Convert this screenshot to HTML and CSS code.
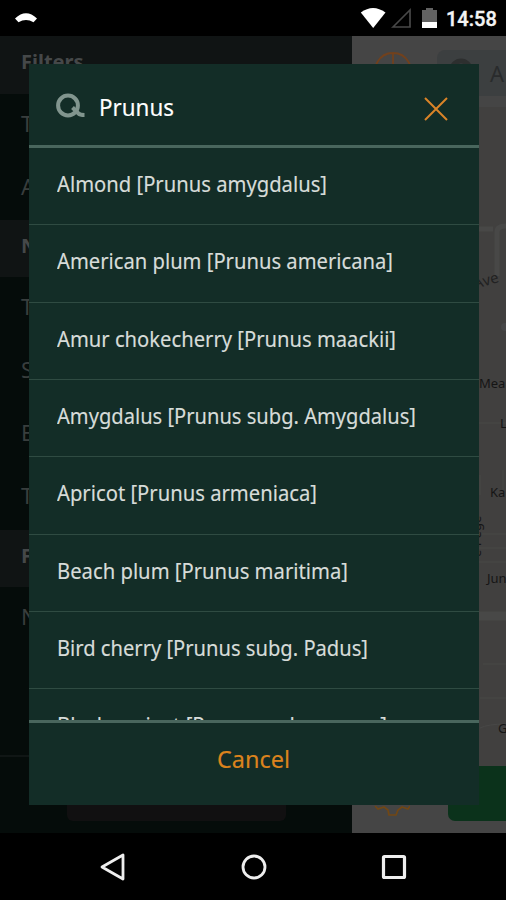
FILE: index.html
```html
<!DOCTYPE html>
<html lang="en">
<head>
<meta charset="utf-8">
<title>Species search</title>
<link rel="stylesheet" href="styles.css">
</head>
<body>
<div class="phone">
  <header class="status">
    <svg class="status-left" width="24" height="12" viewBox="0 0 24 12"><path d="M1 6.500Q12-4 23 6.500L19.500 10.300Q12 5.500 4.500 10.300Z" fill="#fff"/></svg>
    <svg class="status-icons" width="80" height="24" viewBox="0 0 80 24">
      <path d="M.8 6.500Q13-2.500 25.500 6.500L13.200 22Z" fill="#fff"/>
      <path d="M33 21L50 4V21Z" fill="none" stroke="#484848" stroke-width="1.700"/>
      <path d="M62 4h4V2h7v2h4v12H62Z" fill="#626262"/><path d="M62 16h15v6H62Z" fill="#fff"/>
    </svg>
    <span class="clock">14:58</span>
  </header>
  <main class="screen">
    <aside class="drawer">
      <h2>Filters</h2><p>T</p><p>A</p>
      <h2>N</h2><p>T</p><p>S</p><p>E</p><p>T</p>
      <h2>F</h2><p>N</p>
      <div class="drawer-foot"><div class="drawer-button"></div></div>
    </aside>
    <section class="map-pane">
      <div class="map-top">
        <svg class="locate" width="38" height="38" viewBox="0 0 38 38"><path d="M19 1a18 18 0 1 0 .01 0M19 1v12M1 19h12M25 19h12" fill="none" stroke="#71411d" stroke-width="1.800"/></svg>
        <div class="field"><svg width="24" height="24" viewBox="0 0 24 24"><circle cx="12" cy="12" r="9" fill="none" stroke="#2d2f2f" stroke-width="5"/></svg><span>A</span></div>
      </div>
      <svg class="map" width="154" height="659" viewBox="352 107 154 659">
        <g fill="none" stroke="#484847"><path d="M478 229h15M497 276v-44q0-6 9-6" stroke-width="5"/><path d="M478 616h28" stroke-width="9"/><path d="M478 423h28M478 534h28M478 548h28M478 562h28M483 664h23M480 698h26M480 728q8-4 26-4M480 495v-20M503 470v20" stroke-width="1"/></g>
        <circle cx="505" cy="327" r="4" fill="#474748"/>
        <g class="streets"><text class="avenue" x="475" y="289" transform="rotate(-16 475 289)">Ave</text><text x="479" y="388">Mea</text><text x="500" y="428">L</text><text x="490" y="497">Ka</text><text x="487" y="583">Jun</text><text x="498" y="733">G</text><text transform="translate(481 557) rotate(-90)">e Pege</text></g>
      </svg>
      <div class="map-foot">
        <svg class="gear" width="36" height="38" viewBox="0 0 36 38"><path d="M1 27l3 3 6-2 4 3 1 5h7l2-5 4-3 6 2 2-3" fill="none" stroke="#714714" stroke-width="1.700"/></svg>
        <div class="green"></div>
      </div>
    </section>
    <div class="dialog">
      <div class="search">
        <svg class="magnifier" width="29" height="26" viewBox="0 0 29 26"><circle cx="12" cy="12.500" r="9.900" fill="none" stroke="#81958e" stroke-width="4"/><path d="M16.500 14.500L22.500 20.500Q24 22 28.500 22" fill="none" stroke="#81958e" stroke-width="4"/></svg>
        <svg class="query" width="300" height="36"><text x="0" y="27" textLength="75" lengthAdjust="spacingAndGlyphs">Prunus</text></svg>
        <svg class="close" width="24" height="24" viewBox="0 0 24 24"><path d="M1 1L23 23M23 1L1 23" stroke="#da8428" stroke-width="2"/></svg>
      </div>
      <div class="results">
        <div class="row"><svg><text y="28" textLength="270" lengthAdjust="spacingAndGlyphs">Almond [Prunus amygdalus]</text></svg></div>
        <div class="row"><svg><text y="28" textLength="336" lengthAdjust="spacingAndGlyphs">American plum [Prunus americana]</text></svg></div>
        <div class="row"><svg><text y="28" textLength="339" lengthAdjust="spacingAndGlyphs">Amur chokecherry [Prunus maackii]</text></svg></div>
        <div class="row"><svg><text y="28" textLength="359" lengthAdjust="spacingAndGlyphs">Amygdalus [Prunus subg. Amygdalus]</text></svg></div>
        <div class="row"><svg><text y="28" textLength="260" lengthAdjust="spacingAndGlyphs">Apricot [Prunus armeniaca]</text></svg></div>
        <div class="row"><svg><text y="28" textLength="291" lengthAdjust="spacingAndGlyphs">Beach plum [Prunus maritima]</text></svg></div>
        <div class="row"><svg><text y="28" textLength="311" lengthAdjust="spacingAndGlyphs">Bird cherry [Prunus subg. Padus]</text></svg></div>
        <div class="row"><svg><text y="28" textLength="330" lengthAdjust="spacingAndGlyphs">Black apricot [Prunus x dasycarpa]</text></svg></div>
      </div>
      <div class="cancel"><svg width="74" height="36"><text x="0" y="26" textLength="73" lengthAdjust="spacingAndGlyphs">Cancel</text></svg></div>
    </div>
  </main>
  <nav class="nav">
    <svg width="26" height="28" viewBox="0 0 26 28"><path d="M2 14L23 2V26Z" fill="none" stroke="#eee" stroke-width="2.800" stroke-linejoin="round"/></svg>
    <svg width="26" height="28" viewBox="0 0 26 28"><circle cx="13" cy="14" r="11" fill="none" stroke="#eee" stroke-width="2.800"/></svg>
    <svg width="26" height="28" viewBox="0 0 26 28"><rect x="2.500" y="3.500" width="21" height="21" rx="1" fill="none" stroke="#eee" stroke-width="3.200"/></svg>
  </nav>
</div>
</body>
</html>
```

FILE: styles.css
```css
* { box-sizing: border-box; }
body { margin: 0; background: #000; font-family: "Noto Sans", "Open Sans", sans-serif; }
svg { display: block; flex: none; }
.phone { width: 506px; height: 900px; display: flex; flex-direction: column; overflow: hidden; }
.status { height: 36px; display: flex; align-items: flex-start; padding: 0 10px 0 14px; flex: none; }
.status-left { margin-top: 12px; }
.status-icons { margin: 6px 0 0 322px; }
.clock { margin: 7px 0 0 6px; font: 500 20px/24px Roboto, sans-serif; color: #f4f4f4; -webkit-text-stroke: .4px #f4f4f4; }
.screen { position: relative; height: 797px; flex: none; display: flex; }
.drawer { width: 352px; background: #050c0a; display: flex; flex-direction: column; }
.drawer h2 { margin: 0; height: 57.5px; padding-left: 21px; font-size: 20px; line-height: 52px; font-weight: 700; color: #454849; background: #101414; flex: none; }
.drawer p { margin: 0; height: 63.1px; padding-left: 21px; font-size: 22px; line-height: 58px; color: #393e3d; flex: none; }
.drawer-foot { margin-top: auto; height: 78px; border-top: 2px solid #101615; display: flex; justify-content: center; padding-top: 20px; }
.drawer-button { width: 219px; height: 44px; border-radius: 6px; background: #111011; }
.map-pane { width: 154px; background: #454545; display: flex; flex-direction: column; }
.map-top { height: 71px; display: flex; flex: none; }
.locate { margin: 16px 0 0 22px; }
.field { margin: 14px 0 0 25px; width: 69px; height: 46px; border-radius: 8px 0 0 8px; background: #3c3f40; display: flex; flex: none; padding: 8px 0 0 12px; font-size: 22px; line-height: 30px; color: #292b2c; }
.field span { margin-left: 17px; }
.map { background: #41403f; }
.streets text { fill: #151515; font-size: 13px; }
.streets .avenue { font-size: 15px; fill: #222; }
.map-foot { height: 67px; display: flex; }
.gear { margin: 13px 0 0 22px; }
.green { width: 59px; height: 55px; margin-left: 38px; background: #0b321b; border-radius: 0 0 0 7px; flex: none; }
.dialog { position: absolute; left: 29px; top: 28px; width: 449.5px; height: 740.5px; background: #132d27; display: flex; flex-direction: column; }
.search { height: 84px; border-bottom: 3px solid #49665d; display: flex; padding-left: 27px; flex: none; }
.magnifier { margin-top: 29px; }
.query { margin: 25px 0 0 14px; }
.query text { font-size: 24px; fill: #fff; stroke: #fff; stroke-width: .15px; }
.close { margin: 33px 0 0 25px; }
.results { height: 572px; overflow: hidden; flex: none; }
.row { height: 77.33px; border-bottom: 1.500px solid #2f4b42; padding: 16px 0 0 28px; }
.row svg { width: 400px; height: 40px; }
.row text { font-size: 21.500px; fill: #d7dcd9; stroke: #d7dcd9; stroke-width: .15px; }
.cancel { border-top: 3px solid #49665d; flex: 1; display: flex; justify-content: center; padding-top: 19px; }
.cancel text { font-size: 23.500px; fill: #dc831d; stroke: #dc831d; stroke-width: .15px; }
.nav { height: 67px; display: flex; justify-content: space-between; padding: 20px 99px 0 100px; flex: none; }
```
